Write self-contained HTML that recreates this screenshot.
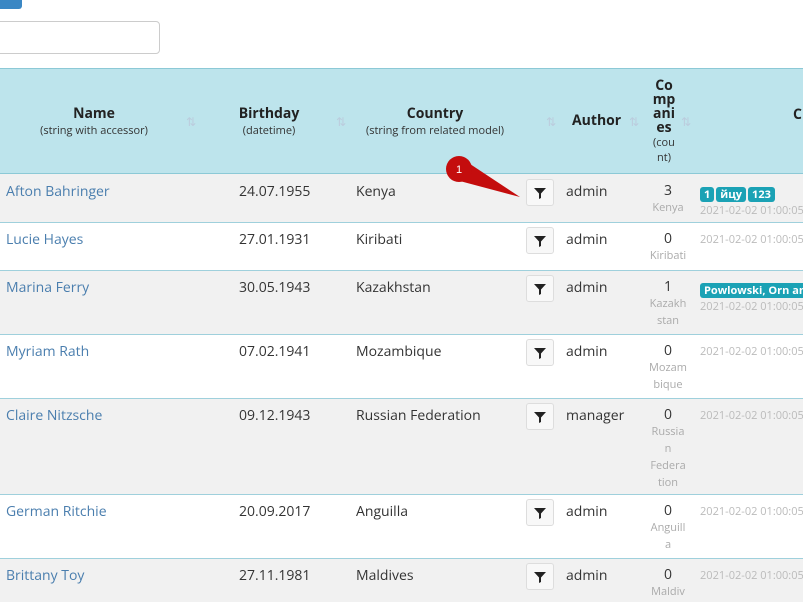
<!DOCTYPE html>
<html><head><meta charset="utf-8"><style>
*{margin:0;padding:0;box-sizing:border-box}
body{width:803px;height:602px;overflow:hidden;background:#fff;font-family:"Open Sans","Liberation Sans","DejaVu Sans",sans-serif;font-size:14px;color:#333;position:relative}
.a{position:absolute;white-space:nowrap}
.row{position:absolute;left:0;width:803px;border-top:1px solid #9fd0dc}
.g{background:#f1f1f1}
.lnk{color:#4a7eae}
.btn{position:absolute;left:526px;width:28px;height:27px;border:1px solid #ddd;border-radius:3px;background:#f8f8f8}
.btn svg{position:absolute;left:7px;top:7px}
.cnt{position:absolute;left:640px;width:56px;text-align:center;line-height:16px}
.cnt .s{font-size:11px;color:#aaa}
.dt{font-size:11px;color:#bbb}
.b{display:inline-block;background:#1ba2b5;color:#fff;font-size:11px;font-weight:bold;border-radius:3px;padding:0 4px;line-height:15px;margin-right:2px}
.h{font-weight:bold;font-size:14px;text-align:center;color:#222;line-height:16px}
.hs{font-size:11px;font-weight:normal;color:#333}
.si{position:absolute;color:#bcd;font-size:12px}
</style></head><body>
<div class="a" style="left:0;top:0;width:22px;height:9px;background:#3a87c4;border-radius:0 0 3px 0"></div>
<div class="a" style="left:-4px;top:21px;width:164px;height:33px;border:1px solid #ccc;border-radius:4px"></div>
<div class="a" style="left:0;top:68px;width:803px;height:107px;background:#bde4ec;border-top:1px solid #8cc9d6;border-bottom:2px solid #8cc9d6"></div>
<div class="a h" style="left:0;top:106px;width:188px">Name<br><span class="hs">(string with accessor)</span></div>
<div class="a si" style="left:186px;top:113px">⇅</div>
<div class="a h" style="left:210px;top:106px;width:118px">Birthday<br><span class="hs">(datetime)</span></div>
<div class="a si" style="left:336px;top:113px">⇅</div>
<div class="a h" style="left:350px;top:106px;width:170px">Country<br><span class="hs">(string from related model)</span></div>
<div class="a si" style="left:546px;top:113px">⇅</div>
<div class="a h" style="left:572px;top:113px">Author</div>
<div class="a si" style="left:629px;top:113px">⇅</div>
<div class="a h" style="left:648px;top:79px;width:32px;white-space:normal;line-height:14px">Co<br>mp<br>ani<br>es<br><span class="hs" style="line-height:14px">(cou<br>nt)</span></div>
<div class="a si" style="left:681px;top:113px">⇅</div>
<div class="a h" style="left:793px;top:107px">C</div>

<div class="row g" style="top:174px;height:48px;border-top:none"></div>
<div class="row" style="top:222px;height:48px"></div>
<div class="row g" style="top:270px;height:64px"></div>
<div class="row" style="top:334px;height:64px"></div>
<div class="row g" style="top:398px;height:96px"></div>
<div class="row" style="top:494px;height:64px"></div>
<div class="row g" style="top:558px;height:44px"></div>

<div class="a lnk" style="left:6px;top:182px">Afton Bahringer</div><div class="a" style="left:239px;top:182px">24.07.1955</div><div class="a" style="left:356px;top:182px">Kenya</div><div class="btn" style="top:179px"><svg width="12" height="12" viewBox="0 0 12 12"><path d="M0 1h12L7 6.5V11L5 12V6.5z" fill="#222"/></svg></div><div class="a" style="left:566px;top:182px">admin</div><div class="cnt" style="top:183px">3<br><span class="s">Kenya</span></div><div class="a" style="left:700px;top:184px"><span class="b">1</span><span class="b">йцу</span><span class="b">123</span></div><div class="a dt" style="left:700px;top:203px">2021-02-02 01:00:05</div>

<div class="a lnk" style="left:6px;top:230px">Lucie Hayes</div><div class="a" style="left:239px;top:230px">27.01.1931</div><div class="a" style="left:356px;top:230px">Kiribati</div><div class="btn" style="top:227px"><svg width="12" height="12" viewBox="0 0 12 12"><path d="M0 1h12L7 6.5V11L5 12V6.5z" fill="#222"/></svg></div><div class="a" style="left:566px;top:230px">admin</div><div class="cnt" style="top:231px">0<br><span class="s">Kiribati</span></div><div class="a dt" style="left:700px;top:232px">2021-02-02 01:00:05</div>

<div class="a lnk" style="left:6px;top:278px">Marina Ferry</div><div class="a" style="left:239px;top:278px">30.05.1943</div><div class="a" style="left:356px;top:278px">Kazakhstan</div><div class="btn" style="top:275px"><svg width="12" height="12" viewBox="0 0 12 12"><path d="M0 1h12L7 6.5V11L5 12V6.5z" fill="#222"/></svg></div><div class="a" style="left:566px;top:278px">admin</div><div class="cnt" style="top:279px">1<br><span class="s">Kazakh<br>stan</span></div><div class="a" style="left:700px;top:280px"><span class="b">Powlowski, Orn and</span></div><div class="a dt" style="left:700px;top:299px">2021-02-02 01:00:05</div>

<div class="a lnk" style="left:6px;top:342px">Myriam Rath</div><div class="a" style="left:239px;top:342px">07.02.1941</div><div class="a" style="left:356px;top:342px">Mozambique</div><div class="btn" style="top:339px"><svg width="12" height="12" viewBox="0 0 12 12"><path d="M0 1h12L7 6.5V11L5 12V6.5z" fill="#222"/></svg></div><div class="a" style="left:566px;top:342px">admin</div><div class="cnt" style="top:343px">0<br><span class="s">Mozam<br>bique</span></div><div class="a dt" style="left:700px;top:344px">2021-02-02 01:00:05</div>

<div class="a lnk" style="left:6px;top:406px">Claire Nitzsche</div><div class="a" style="left:239px;top:406px">09.12.1943</div><div class="a" style="left:356px;top:406px">Russian Federation</div><div class="btn" style="top:403px"><svg width="12" height="12" viewBox="0 0 12 12"><path d="M0 1h12L7 6.5V11L5 12V6.5z" fill="#222"/></svg></div><div class="a" style="left:566px;top:406px">manager</div><div class="cnt" style="top:407px">0<br><span class="s">Russia<br>n<br>Federa<br>tion</span></div><div class="a dt" style="left:700px;top:408px">2021-02-02 01:00:05</div>

<div class="a lnk" style="left:6px;top:502px">German Ritchie</div><div class="a" style="left:239px;top:502px">20.09.2017</div><div class="a" style="left:356px;top:502px">Anguilla</div><div class="btn" style="top:499px"><svg width="12" height="12" viewBox="0 0 12 12"><path d="M0 1h12L7 6.5V11L5 12V6.5z" fill="#222"/></svg></div><div class="a" style="left:566px;top:502px">admin</div><div class="cnt" style="top:503px">0<br><span class="s">Anguill<br>a</span></div><div class="a dt" style="left:700px;top:504px">2021-02-02 01:00:05</div>

<div class="a lnk" style="left:6px;top:566px">Brittany Toy</div><div class="a" style="left:239px;top:566px">27.11.1981</div><div class="a" style="left:356px;top:566px">Maldives</div><div class="btn" style="top:563px"><svg width="12" height="12" viewBox="0 0 12 12"><path d="M0 1h12L7 6.5V11L5 12V6.5z" fill="#222"/></svg></div><div class="a" style="left:566px;top:566px">admin</div><div class="cnt" style="top:567px">0<br><span class="s">Maldiv</span></div><div class="a dt" style="left:700px;top:568px">2021-02-02 01:00:05</div>

<svg class="a" style="left:440px;top:152px" width="90" height="52"><path d="M24 8L80 45L16 28z" fill="#c40d0d"/><circle cx="19" cy="17" r="13" fill="#c40d0d"/><text x="19" y="21" font-size="11" fill="#fff" text-anchor="middle" font-family="Liberation Sans,sans-serif">1</text></svg>
</body></html>
